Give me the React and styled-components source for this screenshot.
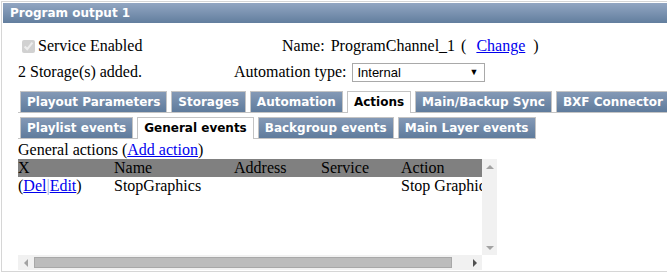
import React from "react";
import styled, { createGlobalStyle } from "styled-components";

const GlobalStyle = createGlobalStyle`
  html, body {
    margin: 0;
    padding: 0;
    background: #ffffff;
  }
  body {
    font-family: "Liberation Serif", "Times New Roman", serif;
    font-size: 16px;
    color: #000000;
  }
`;

const Panel = styled.div`
  margin: 1px 0 0 1px;
  border: 1px solid #d6d6d6;
  border-right: none;
  padding: 1px 0 0 1px;
  height: calc(100vh - 3px);
  box-sizing: border-box;
  overflow: hidden;
`;

const PanelHeader = styled.div`
  height: 20px;
  line-height: 20px;
  padding-left: 7px;
  background: linear-gradient(#92a6c2, #627e9e);
  color: #ffffff;
  font-family: "DejaVu Sans", Verdana, sans-serif;
  font-weight: bold;
  font-size: 12px;
`;

const PanelBody = styled.div`
  padding: 12px 0 0 15px;
`;

const InfoGrid = styled.div`
  display: grid;
  grid-template-columns: 216px auto;
  grid-auto-rows: 22px;
  row-gap: 4px;
  align-items: center;
`;

const InfoCell = styled.div`
  display: flex;
  align-items: center;
  padding-left: ${(p) => p.$indent || 0}px;
  white-space: nowrap;
`;

const Check = styled.input`
  margin: 0 3px 0 4px;
  width: 13px;
  height: 13px;
`;

const Spaced = styled.span`
  margin-left: ${(p) => p.$gap || 0}px;
`;

const Link = styled.a`
  color: #0000ee;
  text-decoration: underline;
  cursor: pointer;
`;

const SelectBox = styled.div`
  margin-left: 6px;
  width: 133px;
  height: 19px;
  box-sizing: border-box;
  border: 1px solid #a9a9a9;
  display: flex;
  align-items: center;
  justify-content: space-between;
  padding: 0 6px 0 4px;
  font-family: "Liberation Sans", Arial, sans-serif;
  font-size: 13px;
  background: #ffffff;
`;

const Arrow = styled.span`
  font-size: 9px;
`;

const TabRows = styled.div`
  display: flex;
  flex-direction: column;
  align-items: flex-start;
`;

const TabBar = styled.div`
  display: inline-flex;
  gap: 4px;
  padding-left: 2px;
  border-bottom: 1px solid #c4c4c4;
  margin-top: ${(p) => p.$top || 0}px;
`;

const Tab = styled.div`
  box-sizing: border-box;
  line-height: 20px;
  padding: 0 6px;
  border: 1px solid #c4c4c4;
  border-bottom: none;
  margin-bottom: ${(p) => (p.$active ? "-1px" : "0")};
  height: ${(p) => (p.$active ? "22px" : "21px")};
  background: ${(p) =>
    p.$active ? "#ffffff" : "linear-gradient(#8499b6, #5f7b9c)"};
  color: ${(p) => (p.$active ? "#000000" : "#ffffff")};
  font-family: "DejaVu Sans", Verdana, sans-serif;
  font-weight: bold;
  font-size: 12px;
  white-space: nowrap;
`;

const Caption = styled.div`
  margin-top: 1px;
  line-height: 19px;
`;

/* the list box with its (always shown) scrollbars */
const ScrollFrame = styled.div`
  display: grid;
  grid-template-columns: 464px 15px;
  grid-template-rows: 96px 15px;
  width: 479px;
`;

const Viewport = styled.div`
  overflow: hidden;
`;

const ScrollBar = styled.div`
  display: flex;
  flex-direction: ${(p) => (p.$vertical ? "column" : "row")};
  background: #f1f1f1;
`;

const ScrollTrack = styled.div`
  flex: 1;
  display: flex;
  align-items: stretch;
  padding: 2px 0;
`;

const Thumb = styled.div`
  margin-left: 1px;
  background: #bcbcbc;
  border: 1px solid #a8a8a8;
  box-sizing: border-box;
`;

const ScrollButton = styled.div`
  width: 15px;
  height: 15px;
  flex: none;
  display: flex;
  align-items: center;
  justify-content: center;
`;

const Corner = styled.div`
  background: #ffffff;
`;

const arrowBorders = {
  up: (c) => `border-width: 0 4px 4px 4px; border-color: transparent transparent ${c} transparent;`,
  down: (c) => `border-width: 4px 4px 0 4px; border-color: ${c} transparent transparent transparent;`,
  left: (c) => `border-width: 4px 4px 4px 0; border-color: transparent ${c} transparent transparent;`,
  right: (c) => `border-width: 4px 0 4px 4px; border-color: transparent transparent transparent ${c};`,
};

const Triangle = styled.span`
  width: 0;
  height: 0;
  border-style: solid;
  ${(p) => arrowBorders[p.$dir](p.$dark ? "#505050" : "#a3a3a3")}
`;

const Table = styled.table`
  width: 482px;
  border-collapse: collapse;
  border-spacing: 0;
  table-layout: fixed;
`;

const HeadCell = styled.th`
  background: #808080;
  font-weight: normal;
  text-align: left;
  padding: 0;
  height: 18px;
  line-height: 18px;
  width: ${(p) => p.$w}px;
`;

const Cell = styled.td`
  padding: 0;
  height: 18px;
  line-height: 18px;
  white-space: nowrap;
  overflow: hidden;
`;

const Sep = styled.span`
  color: #9aa6e0;
`;

const columns = [
  { name: "X", w: 96 },
  { name: "Name", w: 120 },
  { name: "Address", w: 87 },
  { name: "Service", w: 80 },
  { name: "Action", w: 99 },
];

const mainTabs = [
  "Playout Parameters",
  "Storages",
  "Automation",
  "Actions",
  "Main/Backup Sync",
  "BXF Connector",
];

const eventTabs = [
  "Playlist events",
  "General events",
  "Backgroup events",
  "Main Layer events",
];

const VIEW_WIDTH = 464;
const TABLE_WIDTH = 482;
const TRACK_WIDTH = VIEW_WIDTH - 30;

export default function App() {
  const thumbWidth = Math.round((VIEW_WIDTH / TABLE_WIDTH) * TRACK_WIDTH);

  return (
    <>
      <GlobalStyle />
      <Panel>
        <PanelHeader>Program output 1</PanelHeader>
        <PanelBody>
          <InfoGrid>
            <InfoCell>
              <Check type="checkbox" checked disabled readOnly />
              Service Enabled
            </InfoCell>
            <InfoCell $indent={48}>
              <span>Name:</span>
              <Spaced $gap={6}>ProgramChannel_1</Spaced>
              <Spaced $gap={6}>(</Spaced>
              <Spaced $gap={10}>
                <Link>Change</Link>
              </Spaced>
              <Spaced $gap={8}>)</Spaced>
            </InfoCell>
            <InfoCell>2 Storage(s) added.</InfoCell>
            <InfoCell>
              Automation type:
              <SelectBox>
                <span>Internal</span>
                <Arrow>▼</Arrow>
              </SelectBox>
            </InfoCell>
          </InfoGrid>

          <TabRows>
            <TabBar $top={8}>
              {mainTabs.map((t) => (
                <Tab key={t} $active={t === "Actions"}>
                  {t}
                </Tab>
              ))}
            </TabBar>
            <TabBar $top={4}>
              {eventTabs.map((t) => (
                <Tab key={t} $active={t === "General events"}>
                  {t}
                </Tab>
              ))}
            </TabBar>
          </TabRows>

          <Caption>
            General actions (<Link>Add action</Link>)
          </Caption>

          <ScrollFrame>
            <Viewport>
              <Table>
                <thead>
                  <tr>
                    {columns.map((c) => (
                      <HeadCell key={c.name} $w={c.w}>
                        {c.name}
                      </HeadCell>
                    ))}
                  </tr>
                </thead>
                <tbody>
                  <tr>
                    <Cell>
                      (<Link>Del</Link>
                      <Sep>|</Sep>
                      <Link>Edit</Link>)
                    </Cell>
                    <Cell>StopGraphics</Cell>
                    <Cell />
                    <Cell />
                    <Cell>Stop Graphics</Cell>
                  </tr>
                </tbody>
              </Table>
            </Viewport>
            <ScrollBar $vertical>
              <ScrollButton>
                <Triangle $dir="up" />
              </ScrollButton>
              <ScrollTrack />
              <ScrollButton>
                <Triangle $dir="down" />
              </ScrollButton>
            </ScrollBar>
            <ScrollBar>
              <ScrollButton>
                <Triangle $dir="left" />
              </ScrollButton>
              <ScrollTrack>
                <Thumb style={{ width: thumbWidth }} />
              </ScrollTrack>
              <ScrollButton>
                <Triangle $dir="right" $dark />
              </ScrollButton>
            </ScrollBar>
            <Corner />
          </ScrollFrame>
        </PanelBody>
      </Panel>
    </>
  );
}
